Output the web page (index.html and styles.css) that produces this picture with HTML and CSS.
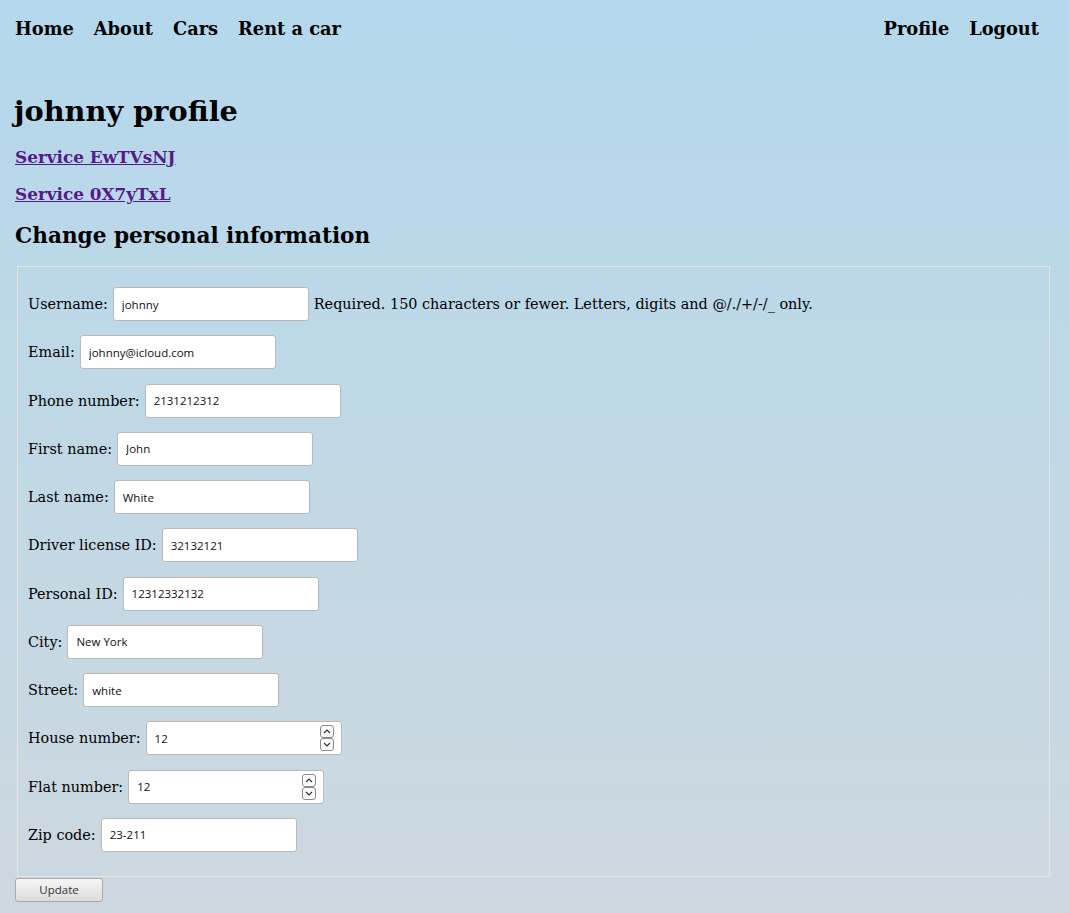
FILE: index.html
```html
<!DOCTYPE html>
<html>
<head>
<meta charset="utf-8">
<title>johnny profile</title>
<link rel="stylesheet" href="styles.css">
</head>
<body>
<nav class="nav">
  <div class="nav-group">
    <a class="nav-link" href="#">Home</a>
    <a class="nav-link" href="#">About</a>
    <a class="nav-link" href="#">Cars</a>
    <a class="nav-link" href="#">Rent a car</a>
  </div>
  <div class="nav-group">
    <a class="nav-link" href="#">Profile</a>
    <a class="nav-link" href="#">Logout</a>
  </div>
</nav>
<main class="content">
  <h1 class="title">johnny profile</h1>
  <h3 class="service"><a href="#">Service EwTVsNJ</a></h3>
  <h3 class="service"><a href="#">Service 0X7yTxL</a></h3>
  <h2 class="subtitle">Change personal information</h2>
  <form class="form">
    <fieldset class="fields">
      <div class="row"><label>Username:</label><input class="field" type="text" value="johnny"><span class="help">Required. 150 characters or fewer. Letters, digits and @/./+/-/_ only.</span></div>
      <div class="row"><label>Email:</label><input class="field" type="text" value="johnny@icloud.com"></div>
      <div class="row"><label>Phone number:</label><input class="field" type="text" value="2131212312"></div>
      <div class="row"><label>First name:</label><input class="field" type="text" value="John"></div>
      <div class="row"><label>Last name:</label><input class="field" type="text" value="White"></div>
      <div class="row"><label>Driver license ID:</label><input class="field" type="text" value="32132121"></div>
      <div class="row"><label>Personal ID:</label><input class="field" type="text" value="12312332132"></div>
      <div class="row"><label>City:</label><input class="field" type="text" value="New York"></div>
      <div class="row"><label>Street:</label><input class="field" type="text" value="white"></div>
      <div class="row"><label>House number:</label><span class="num"><input class="field" type="text" value="12"><span class="spin"><span class="spin-btn"><svg viewBox="0 0 8 5" width="8" height="5"><path d="M1 4 L4 1 L7 4" fill="none" stroke="#333" stroke-width="1.2"/></svg></span><span class="spin-btn"><svg viewBox="0 0 8 5" width="8" height="5"><path d="M1 1 L4 4 L7 1" fill="none" stroke="#333" stroke-width="1.2"/></svg></span></span></span></div>
      <div class="row"><label>Flat number:</label><span class="num"><input class="field" type="text" value="12"><span class="spin"><span class="spin-btn"><svg viewBox="0 0 8 5" width="8" height="5"><path d="M1 4 L4 1 L7 4" fill="none" stroke="#333" stroke-width="1.2"/></svg></span><span class="spin-btn"><svg viewBox="0 0 8 5" width="8" height="5"><path d="M1 1 L4 4 L7 1" fill="none" stroke="#333" stroke-width="1.2"/></svg></span></span></span></div>
      <div class="row"><label>Zip code:</label><input class="field" type="text" value="23-211"></div>
    </fieldset>
    <button class="btn" type="button">Update</button>
  </form>
</main>
</body>
</html>
```
FILE: styles.css
```css
html {
  min-height: 100%;
  background: linear-gradient(to bottom, #b4d8ec 0%, #cdd8df 100%);
}
body {
  margin: 0;
  min-height: 913px;
  font-family: "DejaVu Serif", serif;
  color: #000;
}
.nav {
  display: flex;
  justify-content: space-between;
  align-items: center;
  height: 56px;
  padding: 0 30px 0 15px;
}
.nav-group {
  display: flex;
  gap: 20px;
}
.nav-link {
  font-weight: bold;
  font-size: 17.8px;
  color: #000;
  text-decoration: none;
}
.content {
  padding: 0 17px 0 15px;
}
.title {
  font-size: 28.8px;
  line-height: 34px;
  margin: 38px 0 0 -1px;
}
.service {
  font-size: 16.85px;
  line-height: 20px;
  margin: 19px 0 0;
}
.service + .service {
  margin-top: 17px;
}
.service a {
  color: #551a8b;
}
.subtitle {
  font-size: 21.6px;
  line-height: 26px;
  margin: 19px 0 0;
}
.form {
  margin-top: 17px;
}
.fields {
  margin: 0 2px;
  padding: 20px 10px 24px 10px;
  border: 1px solid #e4e4e0;
  display: flex;
  flex-direction: column;
  gap: 14.27px;
}
.row {
  display: flex;
  align-items: center;
  height: 34px;
  font-size: 14.4px;
}
.row label {
  margin-right: 5px;
}
.field {
  box-sizing: border-box;
  width: 196px;
  height: 34px;
  border: 1px solid #b9b9b9;
  border-radius: 3px;
  background: #fff;
  padding: 0 8px;
  font-family: "Open Sans", "Noto Sans", sans-serif;
  font-size: 11.5px;
  color: #111;
}
.help {
  margin-left: 5px;
}
.num {
  position: relative;
  display: inline-block;
  height: 34px;
}
.spin {
  position: absolute;
  right: 8px;
  top: 4px;
  display: flex;
  flex-direction: column;
}
.spin-btn {
  box-sizing: border-box;
  width: 14px;
  height: 13px;
  border: 1px solid #8a8a8a;
  border-radius: 3px;
  background: #fbfbfb;
  display: flex;
  align-items: center;
  justify-content: center;
}
.btn {
  display: block;
  margin-top: 1px;
  width: 88px;
  height: 24px;
  border: 1px solid #a9a9a9;
  border-radius: 3px;
  background: linear-gradient(to bottom, #f6f6f6, #dcdcdc);
  font-family: "Open Sans", "Noto Sans", sans-serif;
  font-size: 11.5px;
  color: #333;
  padding: 0;
}
```
